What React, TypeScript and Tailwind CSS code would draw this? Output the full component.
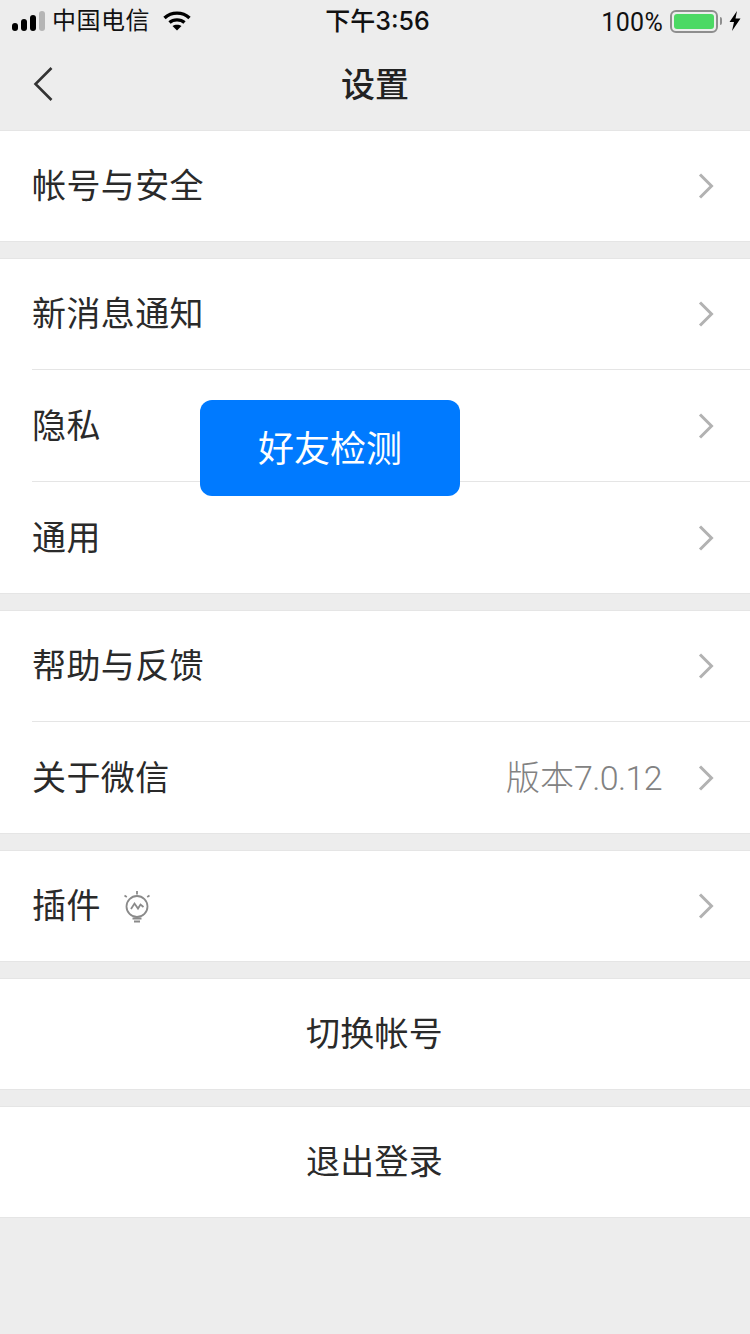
import React from "react";

function Chevron() {
  return (
    <svg width="16" height="26" viewBox="0 0 16 26" className="shrink-0" fill="none">
      <path d="M2 1.5 L13.5 13 L2 24.5" stroke="#b2b2b2" strokeWidth="3" />
    </svg>
  );
}

function Bulb() {
  return (
    <svg width="28" height="32" viewBox="0 0 28 32" fill="none" stroke="#8a8a8a" strokeWidth="1.8" className="ml-[22px] mt-[1px]">
      <circle cx="14" cy="15.5" r="10.5" />
      <path d="M8 18 L11.5 12.5 L15 17.5 L17.5 13.5 L20.5 16" strokeWidth="1.8" />
      <path d="M14 0 V3.5 M1.5 4.5 L3.8 6 M26.5 4.5 L24.2 6" />
      <path d="M9.5 27.5 H18.5 M11 30.5 H17" />
    </svg>
  );
}

function Row({ label, value, bulb, divider }: { label: string; value?: string; bulb?: boolean; divider?: boolean }) {
  return (
    <div className={divider ? "ml-8 h-[112px] flex items-center pr-[36px] border-t border-[#e5e5e5]" : "ml-8 h-[110px] flex items-center pr-[36px]"}>
      <span className="text-[34px] leading-none text-[#2a2a2a] tracking-[0.4px]">{label}</span>
      {bulb && <Bulb />}
      <span className="flex-1" />
      {value && (
        <span className="text-[34px] leading-none text-[#828282] mr-[36px] pt-[1px] font-['Roboto','Noto_Sans_CJK_SC',sans-serif] font-light">
          版本<span className="tracking-[-0.6px]">7.0.12</span>
        </span>
      )}
      <Chevron />
    </div>
  );
}

function Section({ children }: { children: React.ReactNode }) {
  return <div className="bg-white border-y border-[#e5e5e5] mb-4">{children}</div>;
}

function Center({ label }: { label: string }) {
  return (
    <div className="h-[110px] flex items-center justify-center text-[34px] leading-none text-[#2a2a2a] tracking-[0.2px] pr-[1px]">
      {label}
    </div>
  );
}

function StatusBar() {
  return (
    <div className="h-10 grid grid-cols-3 items-center text-[#111111] pt-[2px]">
      <div className="flex items-center pl-3">
        <div className="flex items-end gap-[3px]">
          <span className="w-[6px] h-[8px] rounded-[3px] bg-black" />
          <span className="w-[6px] h-[12px] rounded-[3px] bg-black" />
          <span className="w-[6px] h-[16px] rounded-[3px] bg-black" />
          <span className="w-[6px] h-[20px] rounded-[3px] bg-[#b5b5b5]" />
        </div>
        <span className="text-[24px] leading-none ml-[7px] tracking-[0.5px]">中国电信</span>
        <svg width="28" height="20" viewBox="0 0 28 20" className="ml-[13px]" fill="none" stroke="#000">
          <path d="M1.5 7 C8.5 0.5 19.5 0.5 26.5 7" strokeWidth="3.4" />
          <path d="M6.5 11.5 C10.5 8 17.5 8 21.5 11.5" strokeWidth="3.4" />
          <path d="M14 19.5 L9.5 15 C12 13.2 16 13.2 18.5 15 Z" fill="#000" stroke="none" />
        </svg>
      </div>
      <div className="text-center text-[25px] leading-none font-medium font-['Inter','Noto_Sans_CJK_SC',sans-serif] pl-[5px]">下午3:56</div>
      <div className="flex items-center justify-end pr-[9px]">
        <span className="text-[25px] leading-none font-['Roboto',sans-serif] tracking-[0.3px] pt-[2px]">100%</span>
        <div className="ml-[7px] w-[48px] h-[23px] rounded-[6px] border-2 border-[#8e8e8e] p-[2px]">
          <div className="w-full h-full rounded-[3px] bg-[#4cd964]" />
        </div>
        <span className="w-[2px] h-[8px] bg-[#8e8e8e] rounded-r-[2px] ml-[2px]" />
        <svg width="12" height="20" viewBox="0 0 12 20" className="ml-[7px]" fill="#000">
          <path d="M8 0 L0.5 11 H5 L3 20 L11.5 7.5 H6.5 Z" />
        </svg>
      </div>
    </div>
  );
}

export default function App() {
  return (
    <div className="relative w-[750px] h-[1334px] bg-[#ededed] overflow-hidden font-['Liberation_Sans','Noto_Sans_CJK_SC',sans-serif]">
      <StatusBar />
      <div className="h-[90px] relative flex items-center justify-center">
        <svg width="20" height="34" viewBox="0 0 20 34" fill="none" className="absolute left-[33px] top-[27px]">
          <path d="M18.5 1 L2.5 17 L18.5 33" stroke="#333333" strokeWidth="2.6" />
        </svg>
        <span className="text-[34px] leading-none font-medium text-[#222222]">设置</span>
      </div>
      <Section><Row label="帐号与安全" /></Section>
      <Section>
        <Row label="新消息通知" />
        <Row label="隐私" divider />
        <Row label="通用" divider />
      </Section>
      <Section>
        <Row label="帮助与反馈" />
        <Row label="关于微信" value="版本7.0.12" divider />
      </Section>
      <Section><Row label="插件" bulb /></Section>
      <Section><Center label="切换帐号" /></Section>
      <Section><Center label="退出登录" /></Section>
      <div className="absolute left-[200px] top-[400px] w-[260px] h-[96px] rounded-[12px] bg-[#007aff] flex items-center justify-center text-white text-[36px] leading-none pt-[4px]">
        好友检测
      </div>
    </div>
  );
}
